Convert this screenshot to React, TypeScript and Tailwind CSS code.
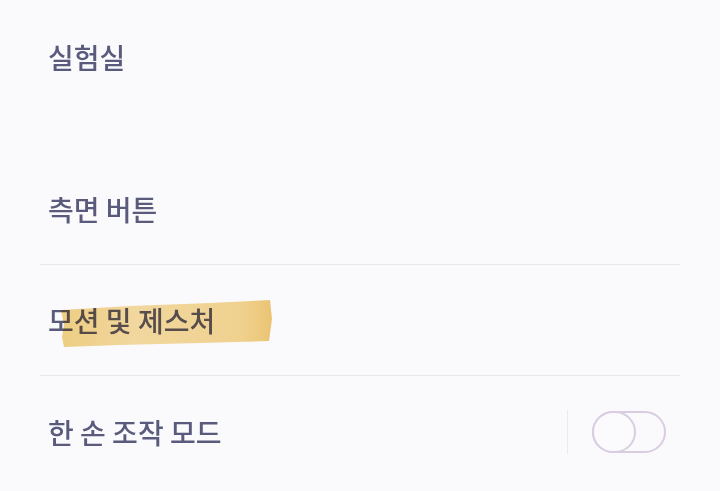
const rows = [
  { label: "측면 버튼" },
  { label: "모션 및 제스처", marked: true },
  { label: "한 손 조작 모드", toggle: true },
];

const Marker = () => (
  <svg
    className="absolute left-[12px] top-[-7px] mix-blend-multiply"
    width="214"
    height="50"
    viewBox="0 0 214 50"
  >
    <defs>
      <linearGradient id="hl" x1="0" y1="0" x2="1" y2="0">
        <stop offset="0" stopColor="#f2cd78" />
        <stop offset="0.35" stopColor="#f6d996" />
        <stop offset="0.85" stopColor="#f4d286" />
        <stop offset="1" stopColor="#eec264" />
      </linearGradient>
    </defs>
    <polygon
      points="1,11 70,7 150,4 210,1 212,20 209,42 140,44 60,46 4,48 2,38 4,26"
      fill="url(#hl)"
      opacity="0.9"
    />
  </svg>
);

const Toggle = () => (
  <div className="flex items-center gap-6 h-full">
    <div className="w-px h-[44px] bg-[#ebe9ef]" />
    <div className="relative w-[74px] h-[42px] rounded-full border-2 border-[#d9cde2]">
      <div className="absolute -left-[2px] -top-[2px] w-[44px] h-[42px] rounded-full border-2 border-[#d9cde2] bg-[#fbfafc]" />
    </div>
  </div>
);

export default function App() {
  return (
    <div
      className="w-[720px] h-[491px] overflow-hidden bg-[#fafafc] text-[#5a5a7c] px-10"
      style={{ fontFamily: '"Noto Sans CJK KR", "Noto Sans", sans-serif' }}
    >
      <div className="h-[114px] flex items-center pl-2 text-[28px] font-medium">실험실</div>
      <div className="mt-[40px]">
        {rows.map((row, i) => (
          <div
            key={row.label}
            className={`h-[111px] flex items-center justify-between pl-2 pr-[14px] ${
              i < rows.length - 1 ? "border-b border-[#e8e7ec]" : ""
            }`}
          >
            <span className="relative text-[28px] leading-none font-medium">
              {row.label}
              {row.marked && <Marker />}
            </span>
            {row.toggle && <Toggle />}
          </div>
        ))}
      </div>
    </div>
  );
}
